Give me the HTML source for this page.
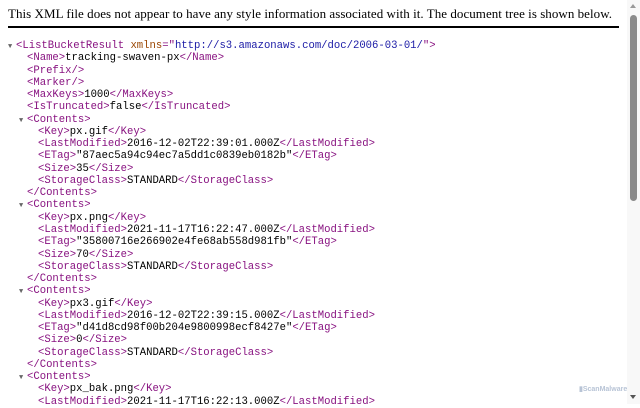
<!DOCTYPE html>
<html><head><style>
html,body{margin:0;padding:0;width:640px;height:404px;overflow:hidden;background:#fff}
.hdr{position:absolute;left:8px;top:6px;font:13px "Liberation Serif",serif;color:#000;white-space:nowrap;letter-spacing:0.04px}
.rule{position:absolute;left:8px;top:26px;width:611px;height:2px;background:#000}
.tree{position:absolute;left:0;top:40px;width:627px;font:10.6px/12.27px "Liberation Mono",monospace;color:#000}
.l{position:relative;height:12.27px;white-space:pre}
.l>span{position:absolute}
.t{color:#881280}.a{color:#994500}.v{color:#1a1aa6}
.l>span.ar{font-size:7px;color:#666;top:1px}
.sb{position:absolute;left:627px;top:0;width:13px;height:404px;background:#f8f8f8}
.th{position:absolute;left:630px;top:15px;width:7px;height:186px;background:#8a8a8a;border-radius:4px}
.up{position:absolute;left:630px;top:4px;width:0;height:0;border-left:3.5px solid transparent;border-right:3.5px solid transparent;border-bottom:4px solid #999}
.dn{position:absolute;left:630px;top:395px;width:0;height:0;border-left:3.5px solid transparent;border-right:3.5px solid transparent;border-top:4px solid #555}
.wm{position:absolute;left:579px;top:385px;font:bold 7px "Liberation Sans",sans-serif;color:#b8c4d6}
</style></head><body>
<div class="hdr">This XML file does not appear to have any style information associated with it. The document tree is shown below.</div>
<div class="rule"></div>
<div class="tree"><div class="l"><span class="ar" style="left:8px">▼</span><span style="left:16px"><span class="t">&lt;ListBucketResult</span> <span class="a">xmlns</span><span class="t">="</span><span class="v">http://s3.amazonaws.com/doc/2006-03-01/</span><span class="t">"&gt;</span></span></div><div class="l"><span style="left:27px"><span class="t">&lt;Name&gt;</span>tracking-swaven-px<span class="t">&lt;/Name&gt;</span></span></div><div class="l"><span style="left:27px"><span class="t">&lt;Prefix/&gt;</span></span></div><div class="l"><span style="left:27px"><span class="t">&lt;Marker/&gt;</span></span></div><div class="l"><span style="left:27px"><span class="t">&lt;MaxKeys&gt;</span>1000<span class="t">&lt;/MaxKeys&gt;</span></span></div><div class="l"><span style="left:27px"><span class="t">&lt;IsTruncated&gt;</span>false<span class="t">&lt;/IsTruncated&gt;</span></span></div><div class="l"><span class="ar" style="left:19px">▼</span><span style="left:27px"><span class="t">&lt;Contents&gt;</span></span></div><div class="l"><span style="left:38px"><span class="t">&lt;Key&gt;</span>px.gif<span class="t">&lt;/Key&gt;</span></span></div><div class="l"><span style="left:38px"><span class="t">&lt;LastModified&gt;</span>2016-12-02T22:39:01.000Z<span class="t">&lt;/LastModified&gt;</span></span></div><div class="l"><span style="left:38px"><span class="t">&lt;ETag&gt;</span>"87aec5a94c94ec7a5dd1c0839eb0182b"<span class="t">&lt;/ETag&gt;</span></span></div><div class="l"><span style="left:38px"><span class="t">&lt;Size&gt;</span>35<span class="t">&lt;/Size&gt;</span></span></div><div class="l"><span style="left:38px"><span class="t">&lt;StorageClass&gt;</span>STANDARD<span class="t">&lt;/StorageClass&gt;</span></span></div><div class="l"><span style="left:27px"><span class="t">&lt;/Contents&gt;</span></span></div><div class="l"><span class="ar" style="left:19px">▼</span><span style="left:27px"><span class="t">&lt;Contents&gt;</span></span></div><div class="l"><span style="left:38px"><span class="t">&lt;Key&gt;</span>px.png<span class="t">&lt;/Key&gt;</span></span></div><div class="l"><span style="left:38px"><span class="t">&lt;LastModified&gt;</span>2021-11-17T16:22:47.000Z<span class="t">&lt;/LastModified&gt;</span></span></div><div class="l"><span style="left:38px"><span class="t">&lt;ETag&gt;</span>"35800716e266902e4fe68ab558d981fb"<span class="t">&lt;/ETag&gt;</span></span></div><div class="l"><span style="left:38px"><span class="t">&lt;Size&gt;</span>70<span class="t">&lt;/Size&gt;</span></span></div><div class="l"><span style="left:38px"><span class="t">&lt;StorageClass&gt;</span>STANDARD<span class="t">&lt;/StorageClass&gt;</span></span></div><div class="l"><span style="left:27px"><span class="t">&lt;/Contents&gt;</span></span></div><div class="l"><span class="ar" style="left:19px">▼</span><span style="left:27px"><span class="t">&lt;Contents&gt;</span></span></div><div class="l"><span style="left:38px"><span class="t">&lt;Key&gt;</span>px3.gif<span class="t">&lt;/Key&gt;</span></span></div><div class="l"><span style="left:38px"><span class="t">&lt;LastModified&gt;</span>2016-12-02T22:39:15.000Z<span class="t">&lt;/LastModified&gt;</span></span></div><div class="l"><span style="left:38px"><span class="t">&lt;ETag&gt;</span>"d41d8cd98f00b204e9800998ecf8427e"<span class="t">&lt;/ETag&gt;</span></span></div><div class="l"><span style="left:38px"><span class="t">&lt;Size&gt;</span>0<span class="t">&lt;/Size&gt;</span></span></div><div class="l"><span style="left:38px"><span class="t">&lt;StorageClass&gt;</span>STANDARD<span class="t">&lt;/StorageClass&gt;</span></span></div><div class="l"><span style="left:27px"><span class="t">&lt;/Contents&gt;</span></span></div><div class="l"><span class="ar" style="left:19px">▼</span><span style="left:27px"><span class="t">&lt;Contents&gt;</span></span></div><div class="l"><span style="left:38px"><span class="t">&lt;Key&gt;</span>px_bak.png<span class="t">&lt;/Key&gt;</span></span></div><div class="l"><span style="left:38px"><span class="t">&lt;LastModified&gt;</span>2021-11-17T16:22:13.000Z<span class="t">&lt;/LastModified&gt;</span></span></div></div>
<div class="sb"></div><div class="th"></div><div class="up"></div><div class="dn"></div>
<div class="wm">▮ScanMalware</div>
</body></html>
